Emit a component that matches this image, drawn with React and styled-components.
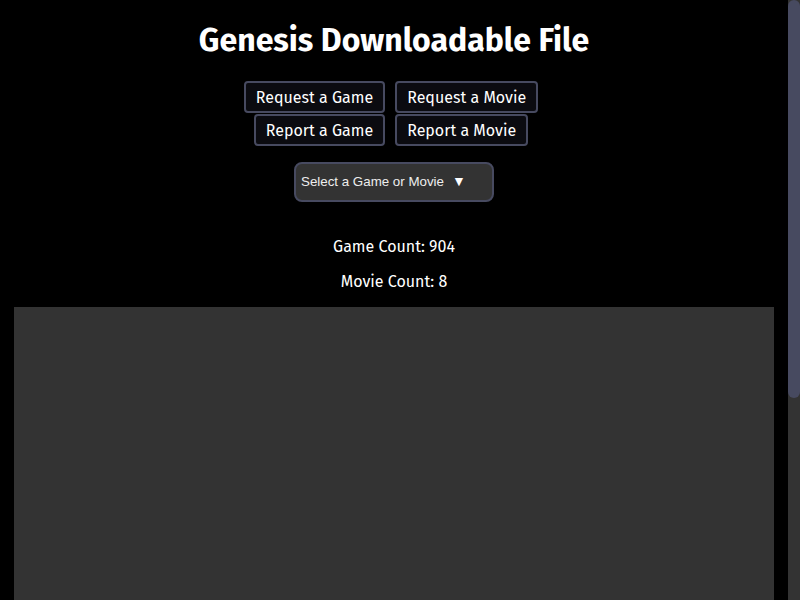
import styled, { createGlobalStyle } from "styled-components";

const GlobalStyle = createGlobalStyle`
  html, body {
    margin: 0;
    padding: 0;
    height: 100%;
    overflow: hidden;
    background: #000;
    color: #fff;
    font-family: "Fira Sans", Lato, "Open Sans", sans-serif;
  }
`;

const Viewport = styled.div`
  display: flex;
  align-items: flex-start;
  height: 100vh;
  overflow: hidden;
`;

const Page = styled.div`
  flex: 1;
  display: flex;
  flex-direction: column;
  align-items: center;
  padding: 0 14px;
`;

const ScrollTrack = styled.div`
  flex: 0 0 12px;
  align-self: stretch;
  display: flex;
  flex-direction: column;
  background: #333;
`;

const ScrollThumb = styled.div`
  height: 398px;
  background: #474a60;
  border-radius: 6px;
`;

const Title = styled.h1`
  margin: 20px 0 21px;
  font-size: 32px;
  font-weight: 700;
  line-height: 40px;
`;

const ButtonRow = styled.div`
  display: flex;
  justify-content: center;
  gap: 10px;
  padding-right: 6px;
  margin-bottom: 1px;
`;

const Button = styled.button`
  background: #0b0b10;
  color: #fff;
  border: 2px solid #474a60;
  border-radius: 4px;
  padding: 0 10px;
  height: 32px;
  font-family: inherit;
  font-size: 16px;
  cursor: pointer;
`;

const Select = styled.div`
  display: flex;
  align-items: center;
  gap: 8px;
  box-sizing: border-box;
  width: 200px;
  height: 40px;
  margin: 15px 0 35px;
  padding: 0 5px 2px;
  background: #333;
  border: 2px solid #474a60;
  border-radius: 8px;
  color: #eee;
  font-family: "Liberation Sans", Arial, sans-serif;
  font-size: 13.33px;
`;

const Arrow = styled.span`
  font-size: 14px;
  color: #fff;
`;

const Count = styled.p`
  margin: 0 0 16px;
  font-size: 16px;
  line-height: 19px;
`;

const Panel = styled.section`
  align-self: stretch;
  height: 597px;
  background: #333;
`;

export default function App() {
  return (
    <>
      <GlobalStyle />
      <Viewport>
        <Page>
          <Title>Genesis Downloadable File</Title>
          <ButtonRow>
            <Button>Request a Game</Button>
            <Button>Request a Movie</Button>
          </ButtonRow>
          <ButtonRow>
            <Button>Report a Game</Button>
            <Button>Report a Movie</Button>
          </ButtonRow>
          <Select>
            <span>Select a Game or Movie</span>
            <Arrow>▼</Arrow>
          </Select>
          <Count>Game Count: 904</Count>
          <Count>Movie Count: 8</Count>
          <Panel />
        </Page>
        <ScrollTrack>
          <ScrollThumb />
        </ScrollTrack>
      </Viewport>
    </>
  );
}
